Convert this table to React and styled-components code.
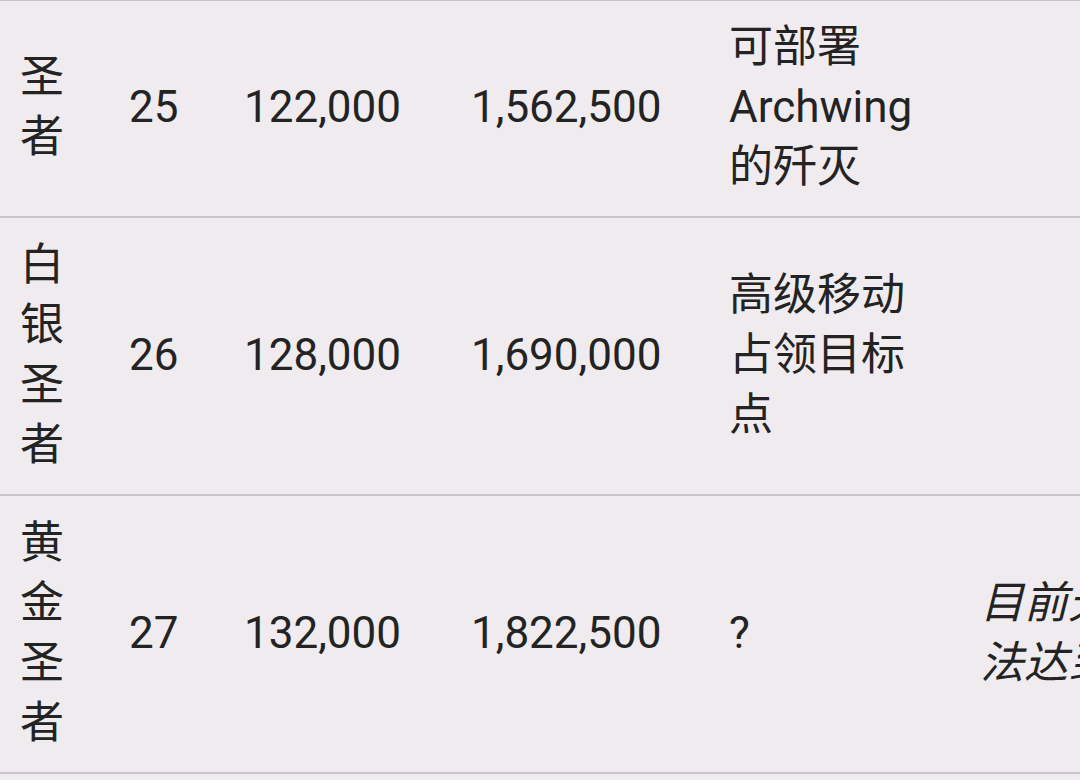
import React from "react";
import styled, { createGlobalStyle } from "styled-components";

const Global = createGlobalStyle`
  html, body {
    margin: 0;
    padding: 0;
    background: #efebef;
    overflow: hidden;
  }
  body {
    font-family: Roboto, "Noto Sans CJK SC", sans-serif;
    color: #232323;
  }
`;

const Page = styled.div`
  width: 1080px;
  height: 780px;
  overflow: hidden;
  background: #efebef;
`;

const Table = styled.table`
  border-collapse: collapse;
  table-layout: fixed;
  width: 1146px;
  border-top: 1px solid #c7c5c7;
  font-size: 44px;
  line-height: 60px;
`;

const Row = styled.tr`
  border-bottom: 2px solid #c7c5c7;
  & > td {
    padding-top: ${(p) => (p.$first ? 16 : 17)}px;
    padding-bottom: 19px;
  }
`;

const Cell = styled.td`
  vertical-align: middle;
  padding-left: ${(p) => p.$pl ?? 34}px;
  padding-right: ${(p) => p.$pr ?? 20}px;
  text-align: left;
  font-style: ${(p) => (p.$italic ? "italic" : "normal")};
  overflow: hidden;
`;

const cols = [95, 115, 227, 258, 251, 200];

const rows = [
  { name: "圣者", rank: "25", a: "122,000", b: "1,562,500", c: "可部署Archwing的歼灭", d: "" },
  { name: "白银圣者", rank: "26", a: "128,000", b: "1,690,000", c: "高级移动占领目标点", d: "" },
  { name: "黄金圣者", rank: "27", a: "132,000", b: "1,822,500", c: "?", d: "目前无法达到" },
];

export default function App() {
  return (
    <Page>
      <Global />
      <Table>
        <colgroup>
          {cols.map((w, i) => (
            <col key={i} style={{ width: w }} />
          ))}
        </colgroup>
        <tbody>
          {rows.map((r, i) => (
            <Row key={r.rank} $first={i === 0}>
              <Cell $pl={20} $pr={20}>{r.name}</Cell>
              <Cell>{r.rank}</Cell>
              <Cell>{r.a}</Cell>
              <Cell>{r.b}</Cell>
              <Cell $pr={20}>{r.c}</Cell>
              <Cell $italic $pr={26}>{r.d}</Cell>
            </Row>
          ))}
        </tbody>
      </Table>
    </Page>
  );
}
